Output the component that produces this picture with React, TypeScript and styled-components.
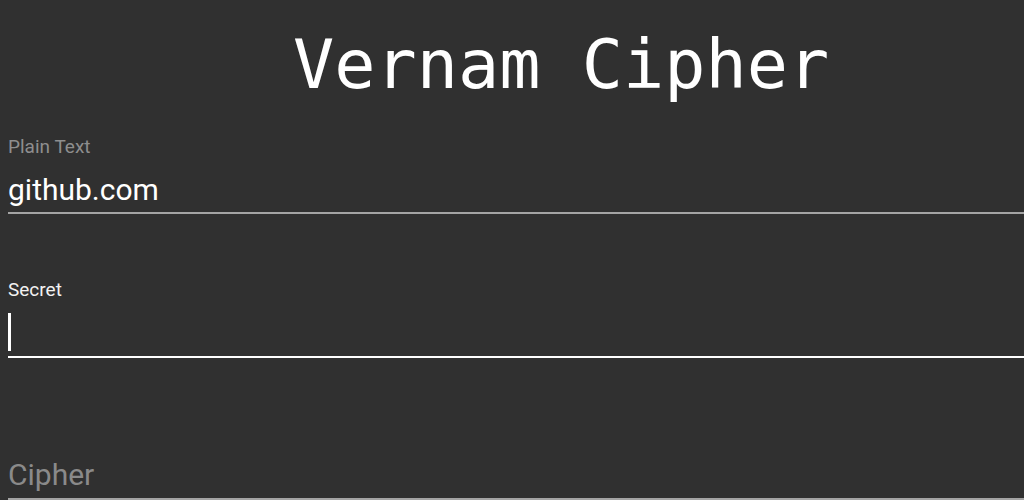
import React from 'react';
import styled, { createGlobalStyle } from 'styled-components';

const GlobalStyle = createGlobalStyle`
    html, body {
        margin: 0;
        padding: 0;
        background: #303030;
    }
`;

const Page = styled.div({
    minHeight: '500px',
    background: '#303030',
    paddingLeft: 8,
    overflow: 'hidden',
    fontFamily: 'Roboto, "Noto Sans", sans-serif',
});

const Title = styled.h1({
    margin: 0,
    marginTop: 30,
    paddingLeft: 285,
    fontFamily: '"DejaVu Sans Mono", "Liberation Mono", monospace',
    fontWeight: 400,
    fontSize: 68.5,
    lineHeight: '69px',
    color: '#ffffff',
    whiteSpace: 'pre',
});

const Field = styled.div<{ $top: number }>(props => ({
    marginTop: props.$top,
}));

const Label = styled.div<{ $focused?: boolean }>(props => ({
    fontSize: 19,
    lineHeight: '22px',
    color: props.$focused ? '#f2f2f2' : '#8e8e8e',
}));

const InputLine = styled.div<{ $focused?: boolean; $gap: number; $height: number; $pad: number }>(props => ({
    marginTop: props.$gap,
    height: props.$height,
    paddingBottom: props.$pad,
    borderBottom: props.$focused ? '2px solid #ffffff' : '2px solid #a4a4a4',
    fontSize: 30,
    lineHeight: '34px',
    color: '#ffffff',
    display: 'flex',
    alignItems: 'flex-start',
}));

const Placeholder = styled.span({
    color: '#8a8a8a',
});

const Caret = styled.span({
    display: 'block',
    width: 3,
    height: 38,
    background: '#ffffff',
});

// Vernam cipher form, matching the Android-style text fields
export default function App(): JSX.Element {
    return (
        <>
            <GlobalStyle />
            <Page>
                <Title>Vernam Cipher</Title>

                <Field $top={37}>
                    <Label>Plain Text</Label>
                    <InputLine $gap={15} $height={34} $pad={5}>github.com</InputLine>
                </Field>

                <Field $top={65}>
                    <Label $focused>Secret</Label>
                    <InputLine $focused $gap={12} $height={43} $pad={0}>
                        <Caret />
                    </InputLine>
                </Field>

                <Field $top={100}>
                    <InputLine $gap={0} $height={34} $pad={6}>
                        <Placeholder>Cipher</Placeholder>
                    </InputLine>
                </Field>
            </Page>
        </>
    );
}
